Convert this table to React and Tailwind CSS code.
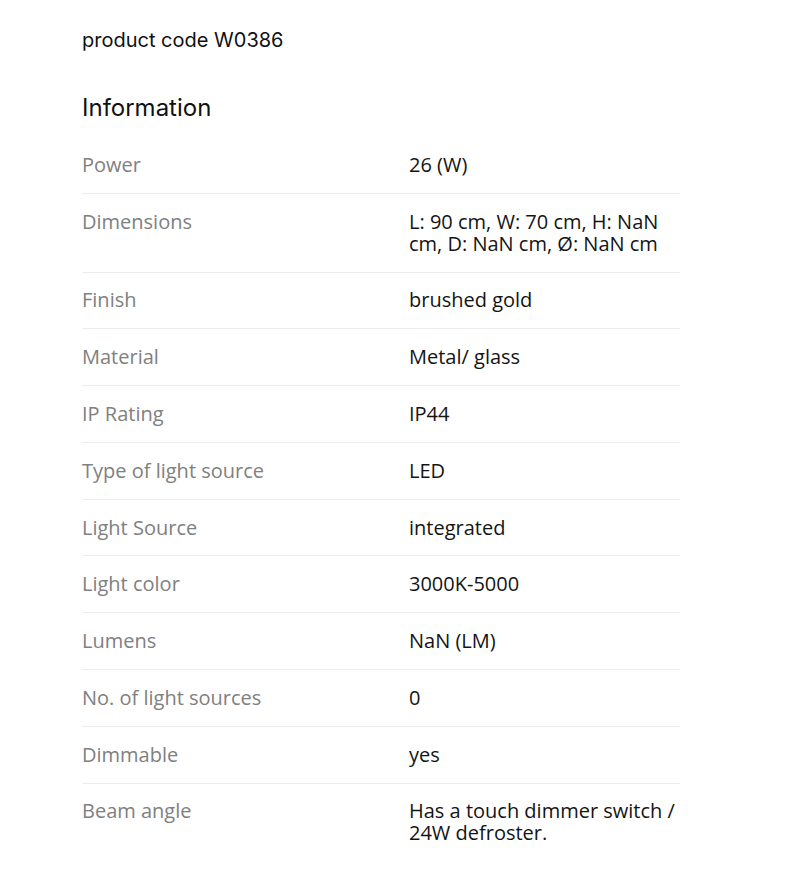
import React from "react";

const specs = [
  ["Power", "26 (W)"],
  ["Dimensions", "L: 90 cm, W: 70 cm, H: NaN cm, D: NaN cm, Ø: NaN cm"],
  ["Finish", "brushed gold"],
  ["Material", "Metal/ glass"],
  ["IP Rating", "IP44"],
  ["Type of light source", "LED"],
  ["Light Source", "integrated"],
  ["Light color", "3000K-5000"],
  ["Lumens", "NaN (LM)"],
  ["No. of light sources", "0"],
  ["Dimmable", "yes"],
  ["Beam angle", "Has a touch dimmer switch / 24W defroster."],
];

const App = () => {
  return (
    <div className="min-h-screen bg-white text-[#111] pl-[82px] pt-[26px]" style={{ fontFamily: "'Open Sans', 'Liberation Sans', sans-serif" }}>
      <p className="text-[20px] leading-[28px]" style={{ fontFamily: "Inter, sans-serif" }}>
        product code W0386
      </p>
      <h2 className="mt-[38px] text-[24px] leading-[32px]" style={{ fontFamily: "Inter, sans-serif" }}>
        Information
      </h2>
      <div className="mt-[13px] w-[598px]">
        {specs.map(([label, value], i) => (
          <div
            key={label}
            className={
              "flex py-[16.9px] text-[20px] leading-[22px] " +
              (i < specs.length - 1 ? "border-b border-[#ececec]" : "")
            }
          >
            <div className="w-[327px] shrink-0 text-[#808080]">{label}</div>
            <div className="w-[271px] text-[#141414]">{value}</div>
          </div>
        ))}
      </div>
    </div>
  );
};

export default App;
